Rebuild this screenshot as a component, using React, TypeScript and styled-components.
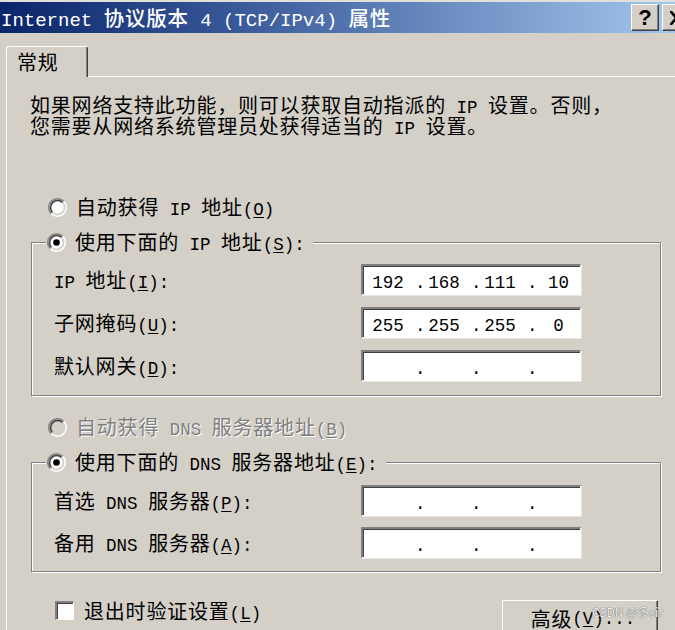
import React from 'react';
import styled, { createGlobalStyle } from 'styled-components';

const Global = createGlobalStyle`
  html, body { margin: 0; padding: 0; background: #d4d0c8; overflow: hidden; }
  body { font-family: "Noto Sans CJK SC", sans-serif; font-size: 20px; }
  #root { width: 691px; }
`;

const CJK_RE = /[\u2E80-\u9FFF\u3000-\u303F\uFF00-\uFFEF]/;

const Han = styled.span`
  font-family: "Noto Sans CJK SC", sans-serif;
  font-size: 20px;
  letter-spacing: 0.8px;
`;

const Lat = styled.span`
  font-family: "Liberation Mono", "DejaVu Sans Mono", monospace;
  font-size: 17.5px;
  line-height: 12px;
  white-space: pre;
`;

const Mn = styled.span`
  text-decoration: underline;
  text-decoration-thickness: 1px;
  text-underline-offset: 2px;
`;

type Part = string | { mn: string };
type Piece = { cjk: boolean; parts: Part[] };

function parse(text: string): Piece[] {
  const out: Piece[] = [];
  let mn = false;
  for (const ch of Array.from(text)) {
    if (ch === '&') {
      mn = true;
      continue;
    }
    const cjk = CJK_RE.test(ch);
    let cur = out[out.length - 1];
    if (!cur || cur.cjk !== cjk) {
      cur = { cjk, parts: [] };
      out.push(cur);
    }
    if (mn) {
      cur.parts.push({ mn: ch });
      mn = false;
    } else {
      const last = cur.parts[cur.parts.length - 1];
      if (typeof last === 'string') cur.parts[cur.parts.length - 1] = last + ch;
      else cur.parts.push(ch);
    }
  }
  return out;
}

function Txt({ text }: { text: string }) {
  return (
    <>
      {parse(text).map((p, i) => {
        const kids = p.parts.map((pt, j) =>
          typeof pt === 'string' ? pt : <Mn key={j}>{pt.mn}</Mn>
        );
        return p.cjk ? <Han key={i}>{kids}</Han> : <Lat key={i}>{kids}</Lat>;
      })}
    </>
  );
}

/* ---------- window chrome ---------- */

const Window = styled.div`
  width: 691px;
  height: 660px;
  background: #d4d0c8;
  color: #000;
  display: flex;
  flex-direction: column;
`;

const TitleBar = styled.div`
  height: 31px;
  border-top: 2px solid #e2e0da;
  background: linear-gradient(90deg, #0a246a 0%, #3a5a9a 35%, #a6caf0 100%);
  display: flex;
  align-items: center;
  padding: 0 1px 0 1px;
  color: #fff;
  white-space: nowrap;
`;

const TitleText = styled.div`
  flex: 1;
  line-height: 24px;
  font-weight: 500;
  ${Han} { font-size: 20.5px; }
  ${Lat} { font-size: 19px; }
`;

const CaptionButton = styled.div`
  width: 28px;
  height: 27px;
  box-sizing: border-box;
  background: #d4d0c8;
  border-top: 1px solid #fff;
  border-left: 1px solid #fff;
  border-right: 1px solid #404040;
  border-bottom: 1px solid #404040;
  box-shadow: inset -1px -1px 0 #808080;
  display: flex;
  align-items: center;
  justify-content: center;
  margin-left: 3px;
  font-family: "Liberation Sans", Arial, sans-serif;
  font-weight: bold;
  font-size: 22px;
  color: #000;
`;

const Body = styled.div`
  flex: 1;
  padding: 13px 6px 0 6px;
  display: flex;
  flex-direction: column;
`;

const TabStrip = styled.div`
  display: flex;
  align-items: flex-end;
`;

const Tab = styled.div`
  width: 82px;
  height: 31px;
  box-sizing: border-box;
  border-top: 1px solid #fff;
  border-left: 1px solid #fff;
  border-right: 1px solid #404040;
  border-radius: 3px 3px 0 0;
  box-shadow: inset -1px 0 0 #808080;
  padding-left: 10px;
  display: flex;
  align-items: center;
  line-height: 22px;
`;

const TabFill = styled.div`
  flex: 1;
  border-bottom: 1px solid #fff;
`;

const Panel = styled.div`
  flex: 1;
  border-left: 1px solid #fff;
  border-right: 1px solid #404040;
  padding: 17px 23px 0 23px;
  display: flex;
  flex-direction: column;
`;

const Intro = styled.p`
  margin: 0;
  line-height: 21px;
  white-space: nowrap;
`;

const Option = styled.div<{ $disabled?: boolean; $top: number; $indent?: number }>`
  display: flex;
  align-items: center;
  gap: 9px;
  height: 24px;
  line-height: 24px;
  white-space: nowrap;
  margin: ${(p) => p.$top}px 0 0 ${(p) => p.$indent ?? 18}px;
  color: ${(p) => (p.$disabled ? '#808080' : '#000')};
  text-shadow: ${(p) => (p.$disabled ? '1px 1px 0 #fff' : 'none')};
`;

const Group = styled.fieldset<{ $top: number }>`
  margin: ${(p) => p.$top}px 0 0 1px;
  padding: 0;
  min-width: 0;
  border: 1px solid #808080;
  box-shadow: 1px 1px 0 #fff, inset 1px 1px 0 #fff;
`;

const Legend = styled.legend`
  margin-left: 14px;
  padding: 0 8px 0 1px;
  background: #d4d0c8;
`;

const LegendOption = styled.div`
  display: flex;
  align-items: center;
  gap: 9px;
  height: 24px;
  line-height: 24px;
  white-space: nowrap;
`;

const Fields = styled.div<{ $pt: number; $pb: number; $gap: number }>`
  display: grid;
  grid-template-columns: 1fr 220px;
  align-items: center;
  row-gap: ${(p) => p.$gap}px;
  padding: ${(p) => p.$pt}px 79px ${(p) => p.$pb}px 22px;
`;

const FieldLabel = styled.div`
  line-height: 24px;
  white-space: nowrap;
`;

const IpBox = styled.div`
  height: 31px;
  box-sizing: border-box;
  background: #fff;
  border-top: 2px solid #808080;
  border-left: 2px solid #808080;
  border-right: 1px solid #fff;
  border-bottom: 1px solid #fff;
  box-shadow: inset 1px 1px 0 #404040, 1px 1px 0 #e8e6e0;
  display: grid;
  grid-template-columns: 46px 10px 46px 10px 46px 10px 1fr;
  align-items: center;
  padding-left: 6px;
  line-height: 24px;
`;

const Seg = styled.div<{ $last?: boolean }>`
  text-align: center;
  padding-right: ${(p) => (p.$last ? 0 : 8)}px;
`;

const Dot = styled.div`
  text-align: center;
  white-space: nowrap;
`;

const BottomRow = styled.div`
  display: flex;
  justify-content: space-between;
  align-items: flex-start;
  margin-top: 28px;
  padding-right: 3px;
`;

const CheckRow = styled.div`
  display: flex;
  align-items: center;
  gap: 10px;
  margin-left: 25px;
  height: 21px;
  line-height: 21px;
  white-space: nowrap;
`;

const CheckBox = styled.div`
  width: 19px;
  height: 19px;
  box-sizing: border-box;
  background: #fff;
  border-top: 2px solid #808080;
  border-left: 2px solid #808080;
  border-right: 1px solid #fff;
  border-bottom: 1px solid #fff;
  box-shadow: inset 1px 1px 0 #404040;
`;

const PushButton = styled.div`
  position: relative;
  width: 156px;
  height: 36px;
  box-sizing: border-box;
  border-top: 1px solid #fff;
  border-left: 1px solid #fff;
  border-right: 1px solid #404040;
  border-bottom: 1px solid #404040;
  box-shadow: inset -1px -1px 0 #808080;
  display: flex;
  align-items: center;
  justify-content: center;
  padding-top: 2px;
  padding-left: 6px;
  line-height: 24px;
  white-space: nowrap;
`;

const Watermark = styled.span`
  position: absolute;
  right: -6px;
  top: 3px;
  font-family: "Noto Sans CJK SC", sans-serif;
  font-size: 12px;
  line-height: 16px;
  color: #f2f2f2;
  text-shadow: 0 0 1px #555, 0 0 1px #777;
  white-space: nowrap;
`;

/* ---------- drawings ---------- */

function Radio({ checked, disabled }: { checked?: boolean; disabled?: boolean }) {
  return (
    <svg width="19" height="19" viewBox="0 0 12 12" style={{ flex: 'none' }}>
      <circle cx="6" cy="6" r="4.6" fill={disabled ? '#d4d0c8' : '#fff'} />
      <path d="M2.11 9.89A5.5 5.5 0 0 1 9.89 2.11" stroke="#808080" strokeWidth="1" fill="none" />
      <path d="M9.89 2.11A5.5 5.5 0 0 1 2.11 9.89" stroke="#fff" strokeWidth="1" fill="none" />
      <path d="M2.82 9.18A4.5 4.5 0 0 1 9.18 2.82" stroke="#404040" strokeWidth="1" fill="none" />
      <path d="M9.18 2.82A4.5 4.5 0 0 1 2.82 9.18" stroke="#d4d0c8" strokeWidth="1" fill="none" />
      {checked && <circle cx="6" cy="6" r="2.1" fill="#000" />}
    </svg>
  );
}

function CloseGlyph() {
  return (
    <svg width="16" height="14" viewBox="0 0 8 7">
      <path d="M1 0h1l2 2.2L6 0h1v0.8L4.7 3.5 7 6.2V7H6L4 4.8 2 7H1v-0.8l2.3-2.7L1 0.8z" fill="#000" />
    </svg>
  );
}

function IpField({ value }: { value?: [string, string, string, string] }) {
  const v = value ?? ['', '', '', ''];
  return (
    <IpBox>
      <Seg><Txt text={v[0]} /></Seg>
      <Dot><Txt text="." /></Dot>
      <Seg><Txt text={v[1]} /></Seg>
      <Dot><Txt text="." /></Dot>
      <Seg><Txt text={v[2]} /></Seg>
      <Dot><Txt text="." /></Dot>
      <Seg $last><Txt text={v[3]} /></Seg>
    </IpBox>
  );
}

export default function App() {
  return (
    <>
      <Global />
      <Window>
        <TitleBar>
          <TitleText>
            <Txt text="Internet 协议版本 4 (TCP/IPv4) 属性" />
          </TitleText>
          <CaptionButton>?</CaptionButton>
          <CaptionButton>
            <CloseGlyph />
          </CaptionButton>
        </TitleBar>
        <Body>
          <TabStrip>
            <Tab>
              <Txt text="常规" />
            </Tab>
            <TabFill />
          </TabStrip>
          <Panel>
            <Intro>
              <Txt text="如果网络支持此功能，则可以获取自动指派的 IP 设置。否则，" />
              <br />
              <Txt text="您需要从网络系统管理员处获得适当的 IP 设置。" />
            </Intro>

            <Option $top={59}>
              <Radio />
              <span><Txt text="自动获得 IP 地址(&O)" /></span>
            </Option>

            <Group $top={11}>
              <Legend>
                <LegendOption>
                  <Radio checked />
                  <span><Txt text="使用下面的 IP 地址(&S):" /></span>
                </LegendOption>
              </Legend>
              <Fields $pt={10} $pb={14} $gap={12}>
                <FieldLabel><Txt text="IP 地址(&I):" /></FieldLabel>
                <IpField value={['192', '168', '111', '10']} />
                <FieldLabel><Txt text="子网掩码(&U):" /></FieldLabel>
                <IpField value={['255', '255', '255', '0']} />
                <FieldLabel><Txt text="默认网关(&D):" /></FieldLabel>
                <IpField />
              </Fields>
            </Group>

            <Option $top={19} $disabled>
              <Radio disabled />
              <span><Txt text="自动获得 DNS 服务器地址(&B)" /></span>
            </Option>

            <Group $top={11}>
              <Legend>
                <LegendOption>
                  <Radio checked />
                  <span><Txt text="使用下面的 DNS 服务器地址(&E):" /></span>
                </LegendOption>
              </Legend>
              <Fields $pt={11} $pb={13} $gap={11}>
                <FieldLabel><Txt text="首选 DNS 服务器(&P):" /></FieldLabel>
                <IpField />
                <FieldLabel><Txt text="备用 DNS 服务器(&A):" /></FieldLabel>
                <IpField />
              </Fields>
            </Group>

            <BottomRow>
              <CheckRow>
                <CheckBox />
                <span><Txt text="退出时验证设置(&L)" /></span>
              </CheckRow>
              <PushButton>
                <Txt text="高级(&V)..." />
                <Watermark>CSDN @多sir</Watermark>
              </PushButton>
            </BottomRow>
          </Panel>
        </Body>
      </Window>
    </>
  );
}
